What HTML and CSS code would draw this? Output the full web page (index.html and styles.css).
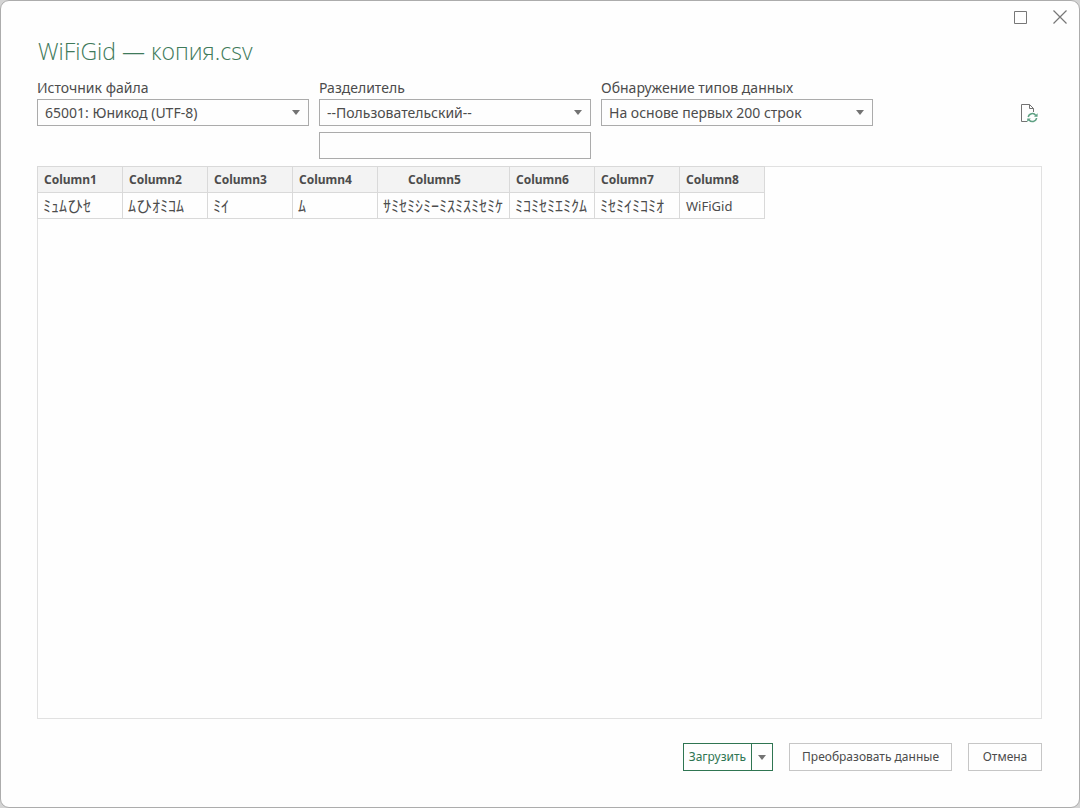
FILE: index.html
```html
<!DOCTYPE html>
<html lang="ru">
<head>
<meta charset="utf-8">
<meta name="viewport" content="width=device-width, initial-scale=1">
<title>WiFiGid — копия.csv</title>
<link rel="stylesheet" href="styles.css">
</head>
<body>
<main class="dialog">
  <div class="titlebar">
    <button class="window-button" type="button" aria-label="Развернуть">
      <svg width="14" height="14" viewBox="0 0 14 14" fill="none" stroke="currentColor"><path d="M1.5 1.5h12v12h-12z"/></svg>
    </button>
    <button class="window-button" type="button" aria-label="Закрыть">
      <svg width="14" height="14" viewBox="0 0 14 14" fill="none" stroke="currentColor" stroke-width="1.2"><path d="M.5.5l13 13M13.5.5l-13 13"/></svg>
    </button>
  </div>
  <h1 class="title">WiFiGid — копия.csv</h1>

  <div class="options">
    <div class="field">
      <label class="field-label" for="origin">Источник файла</label>
      <div class="select-box">
        <select class="control" id="origin"><option>65001: Юникод (UTF-8)</option></select>
      </div>
    </div>
    <div class="field">
      <label class="field-label" for="delimiter">Разделитель</label>
      <div class="select-box">
        <select class="control" id="delimiter"><option>--Пользовательский--</option></select>
      </div>
      <input class="control custom" type="text" aria-label="Пользовательский разделитель">
    </div>
    <div class="field">
      <label class="field-label" for="detection">Обнаружение типов данных</label>
      <div class="select-box">
        <select class="control" id="detection"><option>На основе первых 200 строк</option></select>
      </div>
    </div>
    <button class="refresh" type="button" aria-label="Обновить">
      <svg width="20" height="20" viewBox="0 0 20 20" fill="none">
        <path d="M8 18.5H2.5v-17h8l4 4V9" stroke="#737373"/>
        <path d="M10.5 1.5v4h4" stroke="#737373"/>
        <path d="M9.2 14a4.2 4.2 0 0 1 7.6-1.5M17.6 15a4.2 4.2 0 0 1-7.6 1.7" stroke="#5fa184" stroke-width="1.5"/>
        <path d="M18.6 10.2v3.6H15zM8.2 19v-3.6h3.6z" fill="#5fa184"/>
      </svg>
    </button>
  </div>

  <section class="preview">
    <table class="data">
      <thead>
        <tr><th>Column1</th><th>Column2</th><th>Column3</th><th>Column4</th><th class="wide">Column5</th><th>Column6</th><th>Column7</th><th>Column8</th></tr>
      </thead>
      <tbody>
        <tr><td class="kana">ﾐｭﾑひｾ</td><td class="kana">ﾑひｵﾐｺﾑ</td><td class="kana">ﾐｲ</td><td class="kana">ﾑ</td><td class="kana">ｻﾐｾﾐｼﾐｰﾐｽﾐｽﾐｾﾐｹ</td><td class="kana">ﾐｺﾐｾﾐｴﾐｸﾑ</td><td class="kana">ﾐｾﾐｲﾐｺﾐｵ</td><td>WiFiGid</td></tr>
      </tbody>
    </table>
  </section>

  <footer class="actions">
    <div class="split">
      <button class="load" type="button">Загрузить</button>
      <button class="load-menu" type="button" aria-label="Варианты загрузки"><span class="arrow"></span></button>
    </div>
    <button class="button" type="button">Преобразовать данные</button>
    <button class="button" type="button">Отмена</button>
  </footer>
</main>
</body>
</html>
```
FILE: styles.css
```css
* { box-sizing: border-box; }

body {
  margin: 0;
  background: #d4d4d4;
  color: #4c4c4c;
  font: 14px/20px "Noto Sans", "Open Sans", "Noto Sans CJK JP", sans-serif;
}

button, select, input { font: inherit; color: inherit; }

.dialog {
  display: flex;
  flex-direction: column;
  min-height: 100vh;
  padding: 0 37px 36px 36px;
  border: 1px solid #acacac;
  border-radius: 9px;
  background: #fefefe;
}

.titlebar {
  display: flex;
  justify-content: flex-end;
  gap: 12px;
  height: 32px;
  margin-right: -32px;
}

.window-button {
  display: grid;
  place-items: center;
  width: 28px;
  height: 32px;
  padding: 0;
  border: 0;
  background: none;
  color: #777;
}

.title {
  margin: 0 1px;
  color: #3f7a5a;
  font: 300 23px/36px "Open Sans", "Noto Sans", sans-serif;
}

.options {
  display: flex;
  gap: 10px;
  margin-top: 9px;
}

.field { flex: 0 1 272px; }

.field-label {
  display: block;
  height: 21px;
}

.select-box { position: relative; }

.select-box::after {
  content: "";
  position: absolute;
  top: 11px;
  right: 9px;
  border: solid transparent;
  border-width: 5px 4px 0;
  border-top-color: #737373;
  pointer-events: none;
}

.control {
  display: block;
  width: 100%;
  height: 27px;
  padding: 0 7px;
  border: 1px solid #ababab;
  border-radius: 0;
  background: #fefefe;
  appearance: none;
}

.custom { margin-top: 6px; }

.refresh {
  align-self: flex-start;
  height: 20px;
  margin: 25px 3px 0 auto;
  padding: 0;
  border: 0;
  background: none;
}

.preview {
  flex: 1;
  margin-top: 7px;
  border: 1px solid #e1e1e1;
}

.data {
  margin: -1px;
  border-collapse: collapse;
  font-size: 13px;
}

.data th, .data td {
  min-width: 85px;
  height: 26px;
  padding: 0 6px;
  border: 1px solid #d9d9d9;
  text-align: left;
  white-space: nowrap;
}

.data th { background: #f3f3f3; font-size: 12px; font-weight: 700; }
.data td { background: #fefefe; }
.data .wide { text-align: center; padding-right: 24px; }
.data .kana { padding: 0 6px 2px 5px; font: 16px/20px "Noto Sans CJK JP", sans-serif; }

.actions {
  display: flex;
  justify-content: flex-end;
  gap: 16px;
  margin-top: 24px;
  font-size: 12px;
}

.button, .load, .load-menu {
  height: 28px;
  border: 1px solid #c6c6c6;
  background: #fefefe;
}

.button { min-width: 74px; padding: 0 12px; }
.split { display: flex; }
.load, .load-menu { border-color: #2f7552; }
.load { padding: 0 5px; color: #2f7552; }
.load-menu { width: 22px; margin-left: -1px; padding: 0; }

.arrow {
  display: block;
  width: 8px;
  margin: auto;
  border: solid transparent;
  border-width: 5px 4px 0;
  border-top-color: #737373;
}
```
